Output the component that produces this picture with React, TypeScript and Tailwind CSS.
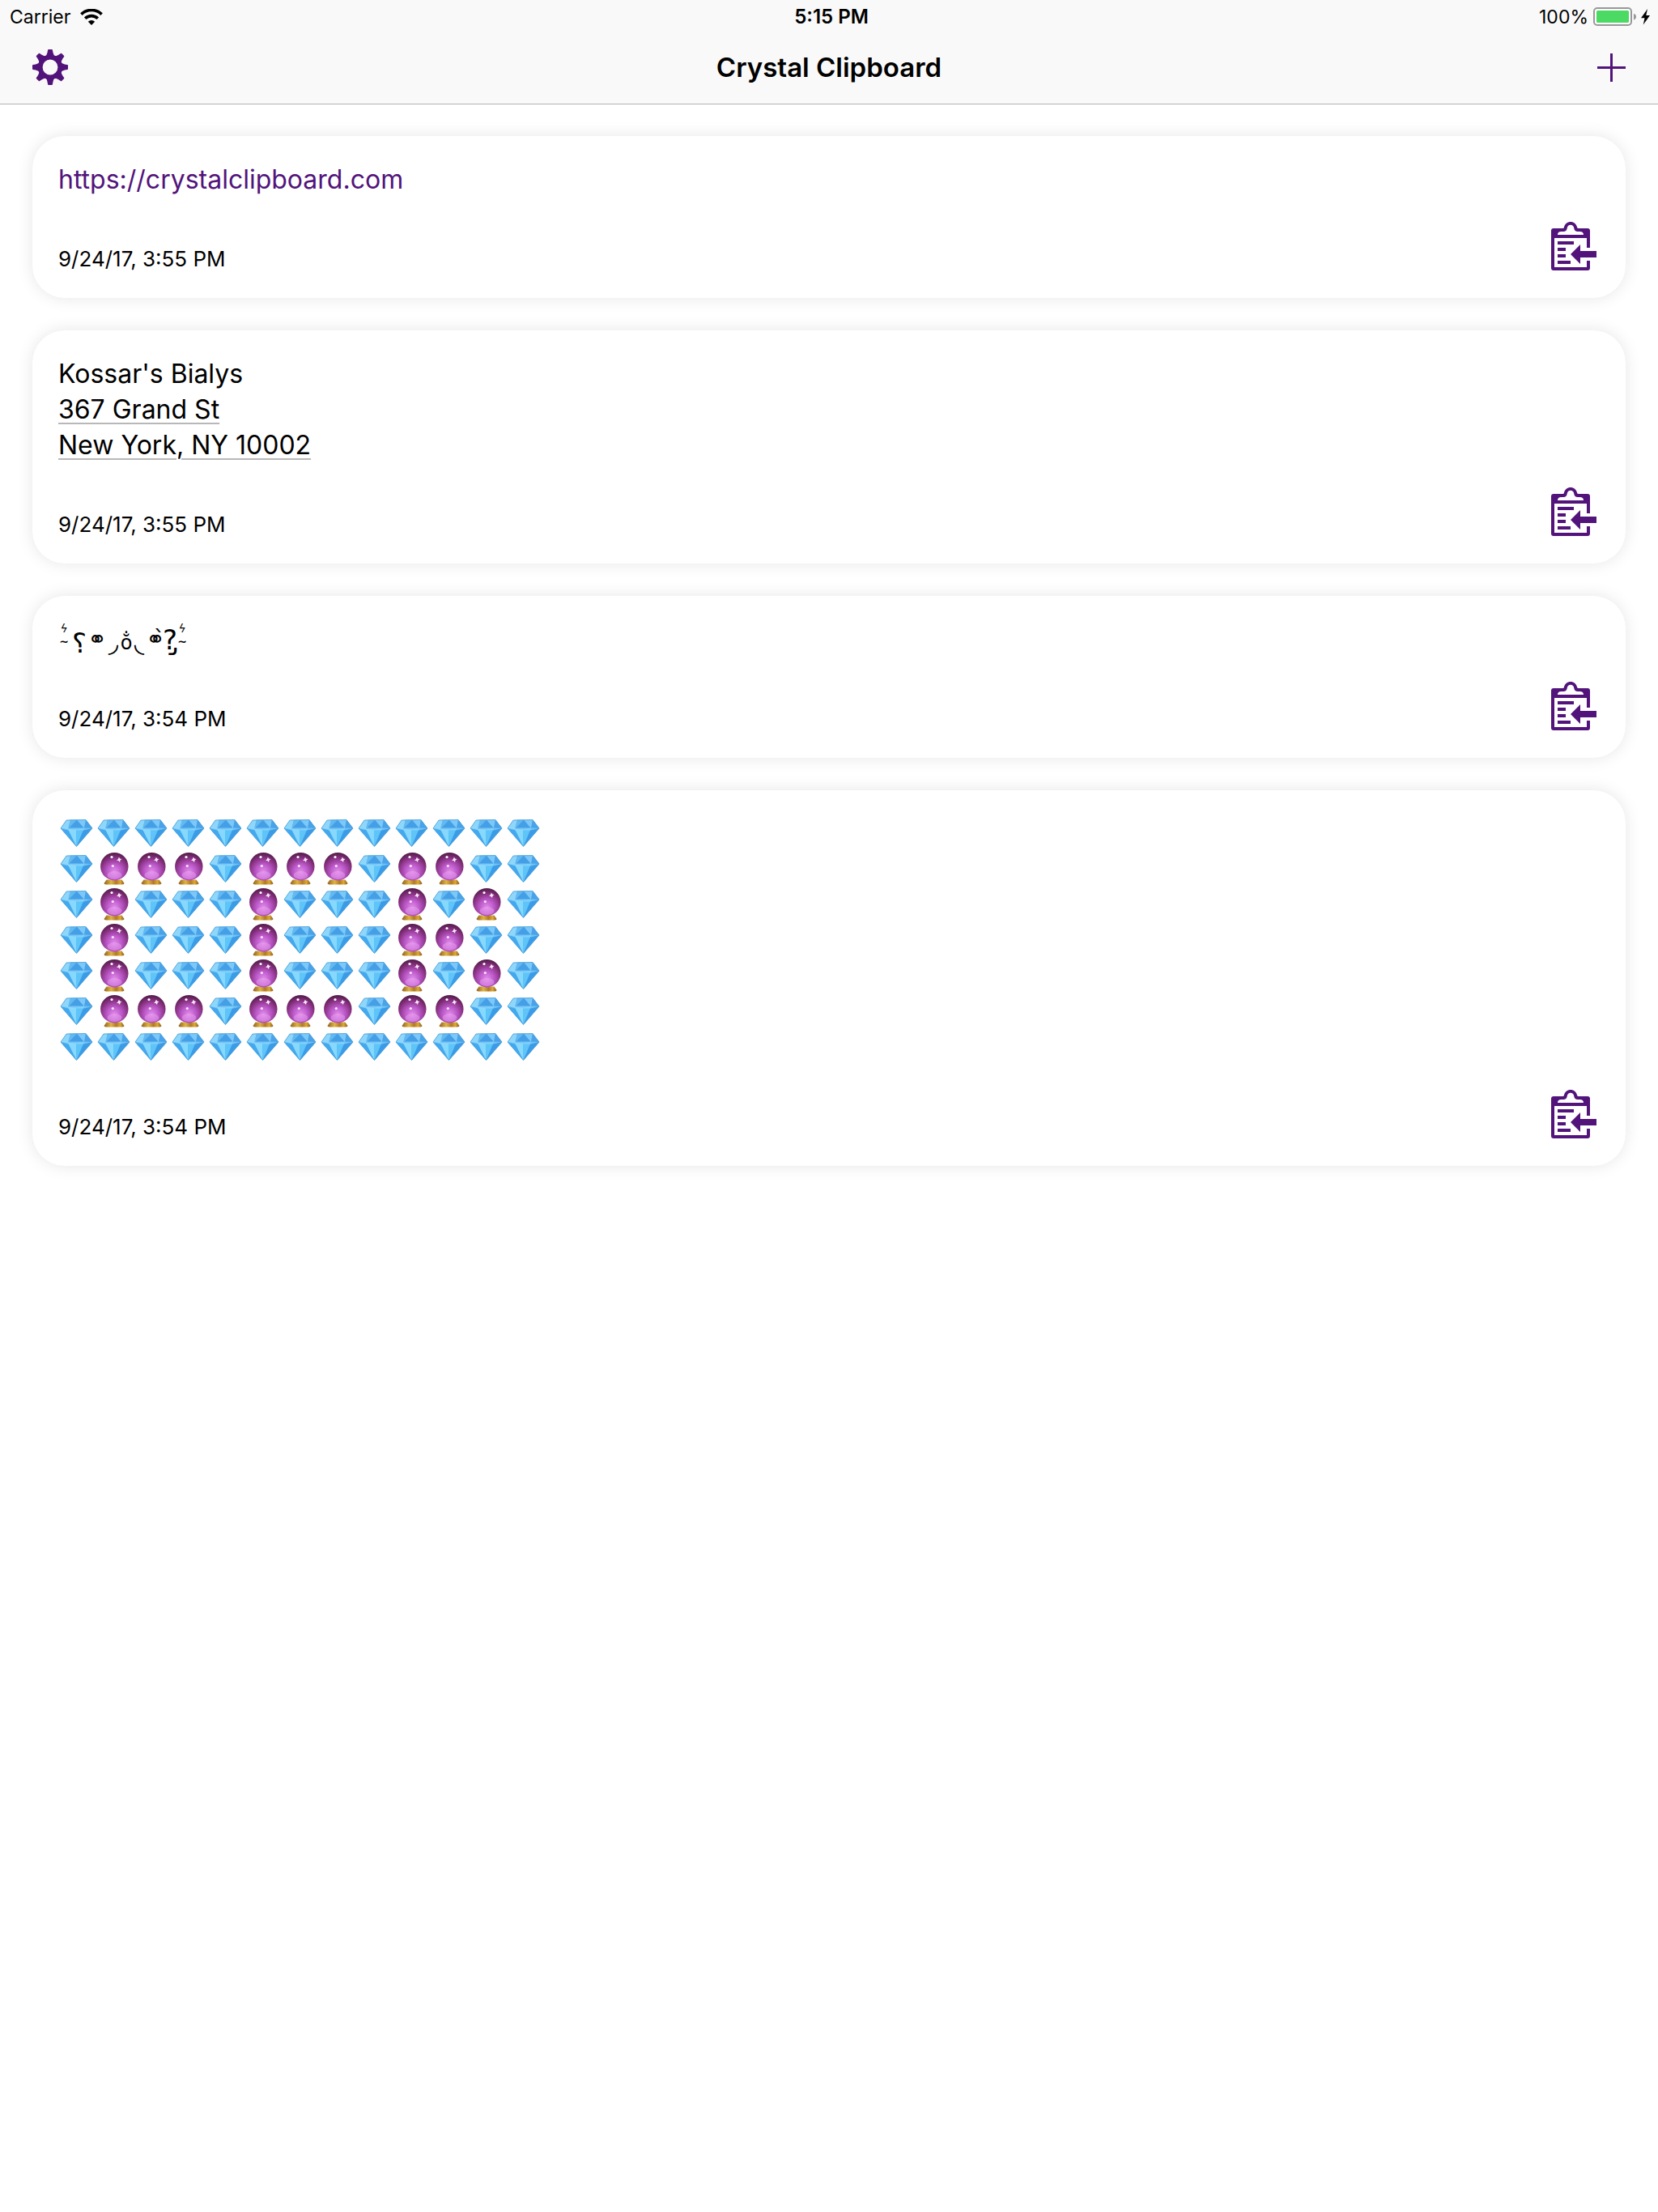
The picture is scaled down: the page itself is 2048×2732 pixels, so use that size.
import type { ReactNode } from "react";

const PURPLE = "#52147b";

function GearIcon() {
  const teeth = [0, 45, 90, 135, 180, 225, 270, 315];
  return (
    <svg viewBox="0 0 44 44" className="size-11" fill={PURPLE} aria-hidden="true">
      <circle cx="22" cy="22" r="12.3" fill="none" stroke={PURPLE} strokeWidth="5.8" />
      {teeth.map((a) => (
        <path
          key={a}
          d="M14.5 10.4 Q18 7.600 18.500 4 L19.100 0.700 Q19.200 0 20 0 L24 0 Q24.800 0 24.900 0.700 L25.500 4 Q26 7.600 29.500 10.400 Z"
          transform={`rotate(${a} 22 22)`}
        />
      ))}
    </svg>
  );
}

function PlusIcon() {
  return (
    <svg viewBox="0 0 35 35" className="size-[35px]" fill={PURPLE} aria-hidden="true">
      <path d="M16 0h3v16h16v3H19v16h-3V19H0v-3h16z" />
    </svg>
  );
}

function WifiIcon() {
  return (
    <svg viewBox="0 0 28 20" className="h-5 w-7" fill="none" stroke="#000" aria-hidden="true">
      <path d="M1.4 6.6A18 18 0 0 1 26.6 6.6" strokeWidth="3.6" />
      <path d="M6.2 11.7A11.3 11.3 0 0 1 21.8 11.7" strokeWidth="3.6" />
      <path d="M9.8 15.8A6 6 0 0 1 18.2 15.8L14 20Z" fill="#000" stroke="none" />
    </svg>
  );
}

function BatteryIcon() {
  return (
    <svg viewBox="0 0 53 24" className="h-6 w-[53px]" aria-hidden="true">
      <rect x="1" y="1" width="46" height="21" rx="4" fill="#fff" stroke="#98989a" strokeWidth="2" />
      <rect x="4" y="4" width="40" height="15" rx="1.5" fill="#4cd964" />
      <path d="M50 8Q53 8.500 53 11.500T50 15.500Z" fill="#98989a" />
    </svg>
  );
}

function BoltIcon() {
  return (
    <svg viewBox="0 0 11 20" className="h-5 w-[11px]" aria-hidden="true">
      <path d="M8 0L0 11.300H4.500L2.800 19.500L11 8H6.300Z" fill="#000" />
    </svg>
  );
}

function CopyIcon() {
  return (
    <svg viewBox="0 0 56 60" className="h-[60px] w-14" fill={PURPLE} aria-hidden="true">
      <path
        fillRule="evenodd"
        d="M3 8H14Q16 8 16 6.500C17 2.500 20 0 24 0S31 2.500 32 6.500Q32 8 34 8H45Q48 8 48 11V32H44V20H4V56H44V48H48V57Q48 60 45 60H3Q0 60 0 57V11Q0 8 3 8ZM8 16H40Q40 12 35.500 12H33C30 12 28.800 10.500 28.300 8A4.300 4.300 0 0 0 19.700 8C19.200 10.500 18 12 15 12H12.500Q8 12 8 16Z"
      />
      <path d="M8 24H28V28H8ZM8 32H18V36H8ZM8 40H18V44H8ZM8 48H24V52H8Z" />
      <path d="M24 40L36 28V36H56V44H36V52Z" />
    </svg>
  );
}

function EmojiPaints() {
  return (
    <svg className="absolute size-0" aria-hidden="true">
      <defs>
        <radialGradient id="orb" cx="50%" cy="68%" r="66%">
          <stop offset="0" stopColor="#e08be9" />
          <stop offset="0.4" stopColor="#bb58c8" />
          <stop offset="0.75" stopColor="#86307f" />
          <stop offset="1" stopColor="#561d4c" />
        </radialGradient>
        <linearGradient id="stand" x1="0" x2="1" y1="0" y2="0">
          <stop offset="0" stopColor="#8f5f1c" />
          <stop offset="0.35" stopColor="#dfb545" />
          <stop offset="0.6" stopColor="#b07b24" />
          <stop offset="0.8" stopColor="#dba838" />
          <stop offset="1" stopColor="#8a5a1a" />
        </linearGradient>
      </defs>
    </svg>
  );
}

function Gem() {
  return (
    <svg viewBox="0 0 46 44" className="h-11 w-[46px]" aria-hidden="true">
      <path d="M10 5L34 4.500L42 15L22.500 37.500L3 15Z" fill="#56b7f5" />
      <path d="M10 5L15 4.500L12 16L3 15Z" fill="#8fd6fb" />
      <path d="M15 4.500L23 4.500L12 16Z" fill="#63b9f0" />
      <path d="M23 4.500L32 15L12 16Z" fill="#459fe6" />
      <path d="M23 4.500L34 4.500L32 15Z" fill="#7cc8f8" />
      <path d="M34 4.500L42 15L32 15Z" fill="#4aa3e8" />
      <path d="M3 15L12 16L22.500 37.500Z" fill="#43a8ee" />
      <path d="M12 16L22 17L22.500 37.500Z" fill="#86d8fc" />
      <path d="M22 17L32 15L22.500 37.500Z" fill="#5fc4f8" />
      <path d="M32 15L42 15L22.500 37.500Z" fill="#3c9be6" />
      <path d="M3 15L12 17.500L32 17.500L42 15L32 14.500L12 14.500Z" fill="#9ce0fd" opacity="0.55" />
      <path d="M10 5L34 4.500L42 15L22.500 37.500L3 15Z" fill="none" stroke="#4b9fd6" strokeWidth="0.8" strokeLinejoin="round" />
    </svg>
  );
}

function CrystalBall() {
  return (
    <svg viewBox="0 0 46 44" className="h-11 w-[46px]" aria-hidden="true">
      <path d="M13.500 34.500H32.500L35.500 39Q35 40.500 31 40.500H15Q11 40.500 10.500 39Z" fill="url(#stand)" />
      <circle cx="23.300" cy="18.200" r="17.200" fill="url(#orb)" />
      <ellipse cx="23.500" cy="29" rx="9" ry="5" fill="#f0a9f7" opacity="0.45" />
      <circle cx="20" cy="6.500" r="1.600" fill="#fff" />
      <path d="M29 6.500L30 8.500L32.500 9L30.500 10.500L30 13L28.300 11L26 10.800L27.700 9.200Z" fill="#ffe9ff" />
      <circle cx="21.300" cy="17.500" r="1.600" fill="#ffe3ff" />
    </svg>
  );
}

const MOSAIC = [
  "ggggggggggggg",
  "gooogooogoogg",
  "gogggogggogog",
  "gogggogggoogg",
  "gogggogggogog",
  "gooogooogoogg",
  "ggggggggggggg",
];

function Mosaic() {
  return (
    <div role="img" aria-label="Crystal balls and gems">
      <EmojiPaints />
      {MOSAIC.map((row, y) => (
        <div key={y} className="flex">
          {row.split("").map((c, x) => (c === "o" ? <CrystalBall key={x} /> : <Gem key={x} />))}
        </div>
      ))}
    </div>
  );
}

function Whisker() {
  return (
    <span className="flex w-3.5 flex-col items-center pb-3">
      <span className="text-[14px] leading-4 italic">ϟ</span>
      <span className="text-[14px] leading-4 font-bold">~</span>
    </span>
  );
}

function Kaomoji() {
  return (
    <div className="flex h-11 items-center font-['DejaVu_Sans',sans-serif] leading-[44px]">
      <Whisker />
      <span className="flex w-6 justify-center pt-2 text-[34px]">⸮</span>
      <span className="flex w-5 justify-center text-[28px]">⚭</span>
      <span className="flex w-5 justify-center pt-2 text-[32px]">◞</span>
      <span className="flex w-3 justify-center pt-2 text-[24px]">o̐</span>
      <span className="flex w-5 justify-center pt-2 text-[32px]">◟</span>
      <span className="flex w-5 justify-center text-[28px]">⚭̀</span>
      <span className="flex w-4 justify-center text-[34px]">?̡</span>
      <Whisker />
    </div>
  );
}

function Clip({ date, children }: { date: string; children: ReactNode }) {
  return (
    <li className="rounded-[40px] bg-white pt-8 pr-9 pb-[34px] pl-8 shadow-[0_0_20px_rgba(0,0,0,0.1)]">
      <div className="text-[32px] leading-[44px]">{children}</div>
      <div className="mt-[30px] flex items-end justify-between">
        <time className="text-[26px] leading-7">{date}</time>
        <button type="button" aria-label="Copy to clipboard">
          <CopyIcon />
        </button>
      </div>
    </li>
  );
}

export default function App() {
  return (
    <div className="min-h-screen bg-white font-['Inter',sans-serif] text-black">
      <header className="border-b border-[#b2b2b2] bg-[#f9f9f9]">
        <div className="grid h-10 grid-cols-3 items-center pt-px pr-[10px] pl-3 text-[23px] leading-7">
          <div className="flex items-center gap-3">
            <span>Carrier</span>
            <WifiIcon />
          </div>
          <div className="pl-1 text-center text-[24px] font-semibold">5:15 PM</div>
          <div className="flex items-center justify-end gap-1.5">
            <span>100%</span>
            <BatteryIcon />
            <BoltIcon />
          </div>
        </div>
        <div className="grid h-[88px] grid-cols-3 items-center px-10 pb-0.5">
          <button type="button" aria-label="Settings" className="justify-self-start">
            <GearIcon />
          </button>
          <h1 className="text-center text-[33px] leading-10 font-semibold">Crystal Clipboard</h1>
          <button type="button" aria-label="Add clip" className="justify-self-end">
            <PlusIcon />
          </button>
        </div>
      </header>
      <main>
        <ul className="flex flex-col gap-10 px-10 pt-[39px] pb-10">
          <Clip date="9/24/17, 3:55 PM">
            <a href="https://crystalclipboard.com" className="text-[#52147b]">
              https://crystalclipboard.com
            </a>
          </Clip>
          <Clip date="9/24/17, 3:55 PM">
            <p>Kossar's Bialys</p>
            <a
              href="#address"
              className="underline decoration-[#b8b8b8] decoration-2 underline-offset-[5px]"
            >
              367 Grand St
              <br />
              New York, NY 10002
            </a>
          </Clip>
          <Clip date="9/24/17, 3:54 PM">
            <Kaomoji />
          </Clip>
          <Clip date="9/24/17, 3:54 PM">
            <Mosaic />
          </Clip>
        </ul>
      </main>
    </div>
  );
}
